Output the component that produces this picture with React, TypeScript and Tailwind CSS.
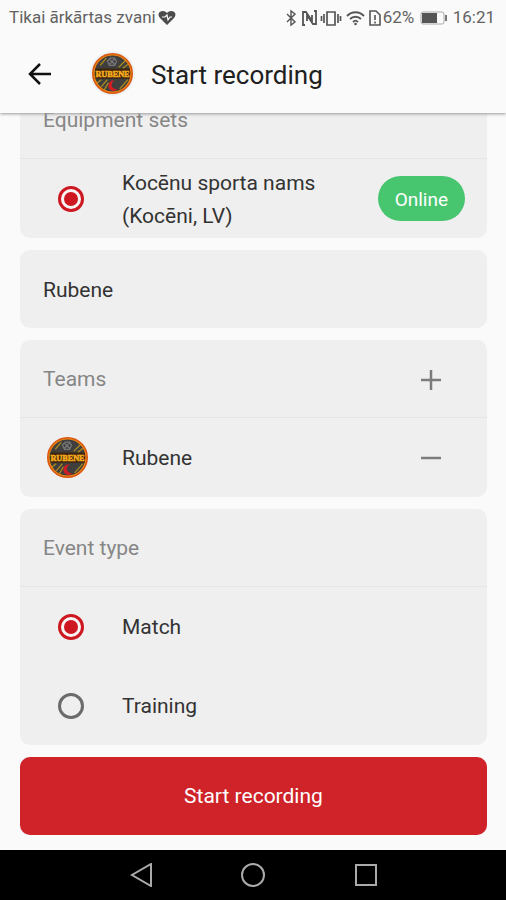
import { useState } from "react";
import type { ReactNode } from "react";

function TeamLogo({ className }: { className: string }) {
  return (
    <svg viewBox="0 0 40 40" className={className} role="img" aria-label="Rubene logo">
      <circle cx="20" cy="20" r="19" fill="#403f3d" />
      <g fill="none" stroke="#a88a22" strokeWidth="1.3">
        <path d="M8 12 14 5M26 14 33 7M30 15 35 11M4 30 9 26M9 33 15 26M12 36 16 29M27 35 35 26" />
      </g>
      <g fill="none" stroke="#77777a" strokeWidth="1.2">
        <path d="M17 12 15 8 18 5 22 5 24 8 22 12ZM17 6 22 11M22 6 17 11" />
      </g>
      <path d="M22 27a5 5 0 1 0 3 8 4 4 0 0 1-3-8Z" fill="#d51d25" />
      <path d="M3 15H37V25H3Z" fill="#3c260f" />
      <text x="20" y="23" textAnchor="middle" fontFamily="Liberation Serif, serif" fontWeight="700" fontSize="8" fill="#f4a91b" stroke="#f4a91b" strokeWidth="0.6">RUBENE</text>
      <circle cx="20" cy="20" r="19" fill="none" stroke="#d8560f" strokeWidth="2" />
      <circle cx="20" cy="20" r="18" fill="none" stroke="#f28a13" strokeWidth="1" />
    </svg>
  );
}

function StatusBar() {
  return (
    <div className="flex h-9 items-center justify-between pr-[11px] pl-[9px] text-[17px] text-[#626262]">
      <div className="flex items-center gap-[2px]">
        <span>Tikai ārkārtas zvani</span>
        <svg viewBox="0 0 18 16" className="h-4 w-[18px]" aria-hidden="true">
          <path d="M9 15 2 8C-1 4 1 1 5 1c2 0 3 1 4 2 1-1 2-2 4-2 4 0 6 3 3 7Z" fill="#4b4b4b" />
          <path d="M4 7h3l2-2 1 5 2-3h2" fill="none" stroke="#fafafa" strokeWidth="1.2" />
        </svg>
      </div>
      <div className="flex items-center">
        <svg viewBox="0 0 98 18" className="h-[18px] w-[98px]" fill="none" stroke="#555" strokeWidth="1.4" aria-hidden="true">
          <path d="m3 5 8 8-4 3V2l4 3-8 8" />
          <path d="M21 16h-2V3h3l6 9V6M30 2h2v13h-3l-6-9v6" strokeWidth="1.8" />
          <path d="M43 3h8v13h-8ZM40 5v9M37.500 7v5M54 5v9M56.500 7v5" strokeWidth="1.7" />
          <path d="M63 7c5-5 12-5 17 0M66 10c3-3 8-3 11 0M69 13c2-2 3-2 5 0" strokeWidth="1.8" />
          <circle cx="71.500" cy="15" r="1.300" fill="#555" stroke="none" />
          <path d="M86 2h6l4 4v10H86ZM91 6v5M91 12.500v2" strokeWidth="1.600" />
        </svg>
        <span className="ml-px w-[36px]">62%</span>
        <svg viewBox="0 0 28 14" className="h-[14px] w-7" aria-hidden="true">
          <rect x="2" y="1" width="23" height="12" rx="2" fill="#fafafa" stroke="#aaa" />
          <rect x="3" y="2" width="15" height="10" fill="#555" />
          <path d="M27 4v6" stroke="#777" strokeWidth="2" />
        </svg>
        <span className="ml-[6px]">16:21</span>
      </div>
    </div>
  );
}

function Card({ title, action, children }: { title: string; action?: ReactNode; children: ReactNode }) {
  return (
    <section className="rounded-[10px] bg-[#efefef]">
      <div className="flex h-[78px] items-center justify-between border-b border-[#e6e6e6] pt-[2px] pr-[45px] pl-[23px]">
        <h2 className="text-[#868686]">{title}</h2>
        {action}
      </div>
      {children}
    </section>
  );
}

type RadioRowProps = { name: string; label: string; checked: boolean; onSelect: () => void; children?: ReactNode };

function RadioRow({ name, label, checked, onSelect, children }: RadioRowProps) {
  return (
    <label className="flex h-[79px] items-center pr-[22px] pl-[38px]">
      <input
        type="radio"
        name={name}
        checked={checked}
        onChange={onSelect}
        className="grid size-[26px] shrink-0 appearance-none place-items-center rounded-full border-[3px] border-[#6b6b6b] before:size-[14px] before:rounded-full checked:border-[#cd1821] checked:bg-[#faf5f5] checked:before:bg-[#cd1821]"
      />
      <span className="ml-[38px] max-w-[220px] pt-[2px] leading-[33px]">{label}</span>
      {children}
    </label>
  );
}

function StepIcon({ plus = false }: { plus?: boolean }) {
  return (
    <svg viewBox="0 0 22 22" className="size-[22px]" fill="none" stroke="#7c7c7c" strokeWidth="2.5" aria-hidden="true">
      <path d={plus ? "M1 11H21M11 1V21" : "M1 11H21"} />
    </svg>
  );
}

export default function App() {
  const [event, setEvent] = useState("match");
  const [name, setName] = useState("Rubene");
  return (
    <div className="flex min-h-screen flex-col bg-[#fafafa] font-[Roboto,sans-serif] text-[21px] text-[#333]">
      <header className="sticky top-0 z-10 bg-[#fafafa] shadow-[0_1px_3px_#999]">
        <StatusBar />
        <div className="flex h-[77px] items-center pb-[2px] pl-7">
          <button type="button" aria-label="Back">
            <svg viewBox="0 0 24 24" className="size-6" fill="none" stroke="#111" strokeWidth="2.5" aria-hidden="true">
              <path d="M23 12H2M12 2 2 12l10 10" />
            </svg>
          </button>
          <div className="ml-[38px] rounded-full bg-[#eef1f4] p-[2px]">
            <TeamLogo className="size-[41px]" />
          </div>
          <h1 className="ml-4 pt-[3px] text-[26px] leading-8 text-[#202020]">Start recording</h1>
        </div>
      </header>
      <main className="-mt-8 flex flex-col gap-3 pr-[19px] pb-[15px] pl-5">
        <Card title="Equipment sets">
          <RadioRow name="equipment" label="Kocēnu sporta nams (Kocēni, LV)" checked onSelect={() => {}}>
            <span className="ml-auto rounded-full bg-[#47c56f] px-[17px] pt-2 pb-[6px] text-[19px] leading-[31px] text-white">Online</span>
          </RadioRow>
        </Card>
        <input
          aria-label="Name"
          value={name}
          onChange={(e) => setName(e.target.value)}
          className="h-[78px] w-full rounded-[10px] bg-[#efefef] px-[23px] pt-[2px]"
        />
        <Card title="Teams" action={<button type="button" aria-label="Add team"><StepIcon plus /></button>}>
          <div className="flex h-[79px] items-center pr-[45px] pl-[27px]">
            <TeamLogo className="size-[41px]" />
            <span className="ml-[34px] pt-[2px]">Rubene</span>
            <button type="button" aria-label="Remove team" className="ml-auto"><StepIcon /></button>
          </div>
        </Card>
        <Card title="Event type">
          <RadioRow name="event" label="Match" checked={event === "match"} onSelect={() => setEvent("match")} />
          <RadioRow name="event" label="Training" checked={event === "training"} onSelect={() => setEvent("training")} />
        </Card>
        <button type="button" className="h-[78px] rounded-[10px] bg-[#cf2229] pt-[2px] text-white">Start recording</button>
      </main>
      <nav className="mt-auto flex h-[50px] items-center justify-center gap-[88px] bg-black" aria-label="System">
        <button type="button" aria-label="Go back">
          <svg viewBox="0 0 24 24" className="size-6" fill="none" stroke="#aaa" strokeWidth="2"><path d="M22 1V23L3 12Z" /></svg>
        </button>
        <button type="button" aria-label="Home">
          <svg viewBox="0 0 24 24" className="size-6" fill="none" stroke="#aaa" strokeWidth="2"><circle cx="12" cy="12" r="11" /></svg>
        </button>
        <button type="button" aria-label="Recent apps">
          <svg viewBox="0 0 24 24" className="size-6" fill="none" stroke="#aaa" strokeWidth="2"><path d="M3 2H23V22H3Z" /></svg>
        </button>
      </nav>
    </div>
  );
}
